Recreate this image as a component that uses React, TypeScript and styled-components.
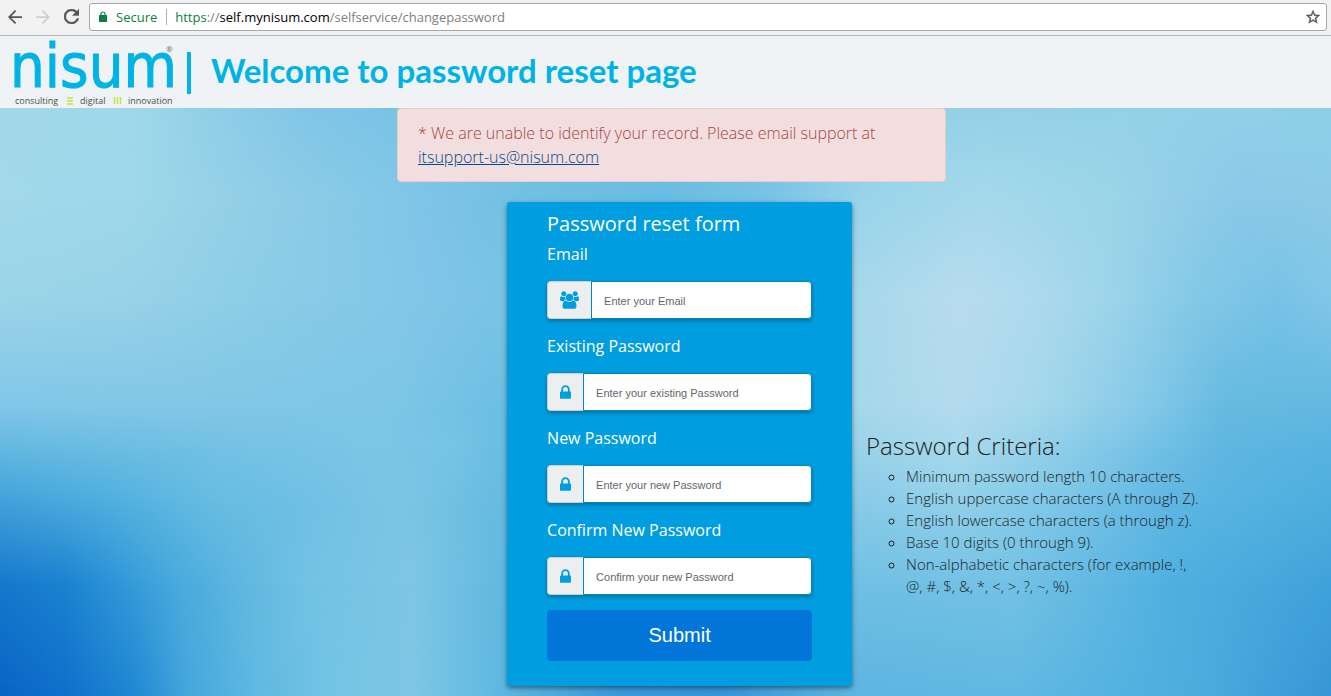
import React from "react";
import styled, { createGlobalStyle } from "styled-components";

const GlobalStyle = createGlobalStyle`
  *, *::before, *::after { box-sizing: border-box; }
  body { margin: 0; font-family: "Open Sans", "Noto Sans", sans-serif; font-size: 16px; }
  h1, h2, ul, p { margin: 0; }
`;

const Page = styled.div`
  display: flex;
  flex-direction: column;
  min-height: 100vh;
`;

/* Browser toolbar */
const Toolbar = styled.div`
  display: flex;
  align-items: center;
  height: 36px;
  padding: 0 4px 2px 8px;
  background: #f2f2f2;
  border-bottom: 1px solid #b4b4b4;
`;

const NavButton = styled.button<{ $muted?: boolean }>`
  display: flex;
  width: 28px;
  padding: 0;
  border: 0;
  background: none;
  color: ${(p) => (p.$muted ? "#cfcfcf" : "#555")};
`;

const AddressBar = styled.div`
  display: flex;
  flex: 1;
  align-items: center;
  height: 28px;
  margin-left: -3px;
  padding: 0 6px 0 9px;
  background: #fff;
  border: 1px solid #a8a8a8;
  border-radius: 3px;
  font-family: "Open Sans", sans-serif;
  font-size: 13px;
  color: #808080;
`;

const Secure = styled.span`
  margin-left: 9px;
  padding-right: 9px;
  border-right: 1px solid #b0b0b0;
  margin-right: 8px;
  line-height: 16px;
  color: #0b8043;
`;

const Url = styled.span`
  flex: 1;
  em { font-style: normal; color: #0b8043; }
  strong { font-weight: 400; color: #000; }
`;

const StarButton = styled(NavButton)`
  width: 14px;
`;

/* Site header */
const Header = styled.header`
  display: flex;
  align-items: center;
  height: 72px;
  padding: 2px 0 0 14px;
  background: #eff3f5;
`;

const Divider = styled.span`
  width: 4px;
  height: 42px;
  margin: 0 20px 0 12px;
  background: #00b3e6;
`;

const Welcome = styled.h1`
  padding-bottom: 6px;
  font-family: Lato, "Open Sans", sans-serif;
  font-size: 33px;
  font-weight: 700;
  line-height: 40px;
  color: #00b3e6;
`;

/* Page body */
const Main = styled.main`
  position: relative;
  isolation: isolate;
  flex: 1;
  padding-bottom: 10px;
  background: #7cc4e4;
`;

const BackdropSvg = styled.svg`
  position: absolute;
  inset: 0;
  z-index: -1;
  width: 100%;
  height: 100%;
`;

const AlertRow = styled.div`
  display: grid;
  grid-template-columns: 33fr minmax(0, 549px) 32fr;
`;

const Alert = styled.p`
  grid-column: 2;
  padding: 12px 20px;
  border: 1px solid #ebcccc;
  border-radius: 4px;
  background: #f2dede;
  line-height: 24px;
  font-weight: 300;
  color: #a94442;
  a { color: #014c8c; }
`;

const Columns = styled.div`
  display: grid;
  grid-template-columns: 18fr 345px 17fr;
  margin-top: 20px;
`;

const Form = styled.form`
  grid-column: 2;
  padding: 8px 40px 25px;
  border-radius: 3px;
  background: #009ee0;
  box-shadow: 0 2px 5px rgba(0, 0, 0, 0.45);
  color: #fff;
`;

const FormTitle = styled.h2`
  margin-bottom: 4px;
  font-size: 20px;
  font-weight: 400;
  line-height: 28px;
`;

const Field = styled.div`
  display: flex;
  flex-direction: column;
  gap: 15px;
  margin-bottom: 15px;
`;

const Label = styled.label`
  line-height: 24px;
`;

const InputGroup = styled.div`
  display: flex;
  height: 38px;
  border-radius: 4px;
  box-shadow: 0 2px 4px rgba(0, 0, 0, 0.3);
`;

const Addon = styled.span`
  display: flex;
  align-items: center;
  padding: 0 12px;
  border: 1px solid #ccc;
  border-right: 0;
  border-radius: 4px 0 0 4px;
  background: #eceeef;
  color: #009ee0;
`;

const TextInput = styled.input`
  flex: 1;
  min-width: 0;
  padding: 2px 12px 0;
  border: 1px solid #0085bd;
  border-radius: 0 4px 4px 0;
  background: #fff;
  font-family: "Liberation Sans", Arial, sans-serif;
  font-size: 11px;
  color: #333;
  &::placeholder { color: #5f666d; opacity: 1; }
`;

const Submit = styled.button`
  width: 100%;
  height: 51px;
  border: 0;
  border-radius: 4px;
  background: #0275d8;
  font-family: "Liberation Sans", Arial, sans-serif;
  font-size: 20px;
  color: #fff;
`;

const Criteria = styled.section`
  max-width: 350px;
  padding: 228px 0 0 14px;
  color: #1c1e1f;
`;

const CriteriaTitle = styled.h2`
  margin-bottom: 3px;
  font-size: 24px;
  font-weight: 300;
  line-height: 32px;
`;

const CriteriaList = styled.ul`
  padding-left: 40px;
  list-style: circle;
  font-size: 15px;
  font-weight: 300;
  line-height: 22px;
`;

/* Bands of colour across the backdrop: each fades into the next one down.
   Positions are percentages of the width (stops) and of the height (y). */
const bands: { y: number; stops: [number, string][] }[] = [
  { y: 0, stops: [[0, "#a2d8ea"], [10, "#a0d8ea"], [15, "#92d1e8"], [23, "#82c5e7"], [30, "#78c4e6"], [48, "#72c2e4"], [70, "#94d0e8"], [84, "#94d2e8"], [100, "#8ed0e8"]] },
  { y: 16, stops: [[0, "#a2d8ea"], [10, "#9ed7ea"], [20, "#90cee6"], [30, "#82c6e8"], [40, "#70bfe3"], [50, "#68bbe1"], [58, "#78c2e6"], [65, "#9ad4ea"], [74, "#a6d9eb"], [84, "#9ad4e8"], [93, "#8ac8e8"], [100, "#8ccae6"]] },
  { y: 33, stops: [[0, "#9ad4e8"], [9, "#98d2e8"], [18, "#8ccee6"], [30, "#84c6e8"], [38, "#78c4e6"], [50, "#6cbee4"], [64, "#a6d8ea"], [72, "#b8dcee"], [77, "#b0daee"], [83, "#9ed5ea"], [90, "#82c8e6"], [96, "#76c2e6"], [100, "#80c6e8"]] },
  { y: 51, stops: [[0, "#80c6e8"], [15, "#82c6e6"], [30, "#7cc6e6"], [38, "#6cbee2"], [50, "#60b8e0"], [64, "#a4d8e8"], [72, "#b4daee"], [78, "#a4d8ea"], [86, "#84c8e8"], [92, "#66bae0"], [100, "#62b8e0"]] },
  { y: 58, stops: [[0, "#62b8e0"], [8, "#6abce2"], [18, "#74c2e4"], [28, "#7cc6e6"], [34, "#76c4e4"], [38, "#6abce2"], [50, "#60b8e0"], [64, "#98d2e8"], [72, "#a6d9ec"], [78, "#94d0ea"], [86, "#76c2e6"], [92, "#5eb6e0"], [100, "#58b2e0"]] },
  { y: 67, stops: [[0, "#42a0da"], [8, "#4eaede"], [16, "#66bce2"], [24, "#72c0e4"], [30, "#7cc6e4"], [38, "#66bae0"], [50, "#50b0e0"], [64, "#88cae8"], [72, "#92d0ea"], [80, "#7cc6e8"], [88, "#5eb6e2"], [100, "#4eaede"]] },
  { y: 81, stops: [[0, "#1678cc"], [5, "#1c82d0"], [9, "#3096d8"], [13, "#46a8dc"], [18, "#5eb6e0"], [23, "#72c2e4"], [31, "#7ec6e4"], [38, "#60b8e0"], [50, "#40a0dc"], [64, "#70c0e4"], [76, "#74c2e4"], [88, "#50b0e0"], [100, "#40a2da"]] },
  { y: 100, stops: [[0, "#0864c4"], [5, "#1070cc"], [10, "#2086d2"], [14, "#44a6dc"], [19, "#5eb8e0"], [25, "#74c4e4"], [31, "#7ec6e4"], [38, "#5cb6e0"], [46, "#3a9adc"], [54, "#3494da"], [64, "#5cb4e0"], [76, "#60b8e2"], [90, "#4cacde"], [100, "#3696d6"]] },
];

const Backdrop = () => (
  <BackdropSvg viewBox="0 0 100 100" preserveAspectRatio="none" aria-hidden="true">
    <defs>
      {bands.map((band, i) => (
        <React.Fragment key={band.y}>
          <linearGradient id={`band${i}`}>
            {band.stops.map(([at, color]) => (
              <stop key={at} offset={`${at}%`} stopColor={color} />
            ))}
          </linearGradient>
          {i > 0 && (
            <>
              <linearGradient id={`fade${i}`} gradientUnits="userSpaceOnUse" x1="0" x2="0" y1={bands[i - 1].y} y2={band.y}>
                <stop offset="0" stopColor="#fff" stopOpacity="0" />
                <stop offset="1" stopColor="#fff" />
              </linearGradient>
              <mask id={`mask${i}`} maskUnits="userSpaceOnUse" x="0" y="0" width="100" height="100">
                <rect width="100" height="100" fill={`url(#fade${i})`} />
              </mask>
            </>
          )}
        </React.Fragment>
      ))}
    </defs>
    {bands.map((band, i) => (
      <rect key={band.y} width="100" height="100" fill={`url(#band${i})`} mask={i > 0 ? `url(#mask${i})` : undefined} />
    ))}
  </BackdropSvg>
);

const Logo = () => (
  <svg width="161" height="70" viewBox="0 0 161 70" role="img" aria-label="nisum consulting digital innovation">
    <text x="-4" y="49" fontFamily='"DejaVu Sans Condensed", "DejaVu Sans", sans-serif' fontSize="61" fill="#00b3e6" stroke="#00b3e6">nisum</text>
    <text x="152" y="14" fontFamily='"Open Sans", sans-serif' fontSize="8" fill="#666">®</text>
    <g fontFamily='"Open Sans", sans-serif' fontSize="9" fill="#4c4c4c">
      <text x="1" y="66">consulting</text>
      <text x="66" y="66">digital</text>
      <text x="114" y="66">innovation</text>
    </g>
    <path d="M53 60h6M53 63h6M53 66h6M100.500 59v7M103.500 59v7M106.500 59v7" stroke="#cfdf3a" strokeWidth="1.500" />
  </svg>
);

const BackIcon = () => (
  <svg width="14" height="14" viewBox="4 4 16 16" fill="currentColor" aria-hidden="true">
    <path d="M20 11H7.83l5.59-5.59L12 4l-8 8 8 8 1.410-1.410L7.830 13H20z" />
  </svg>
);

const ForwardIcon = () => (
  <svg width="14" height="14" viewBox="4 4 16 16" fill="currentColor" aria-hidden="true">
    <path d="M12 4l-1.410 1.410L16.170 11H4v2h12.170l-5.580 5.590L12 20l8-8z" />
  </svg>
);

const ReloadIcon = () => (
  <svg width="15" height="15" viewBox="4 4 16 16" fill="currentColor" stroke="currentColor" strokeWidth="0.4" aria-hidden="true">
    <path d="M17.65 6.35C16.2 4.9 14.21 4 12 4c-4.42 0-7.99 3.58-7.99 8s3.57 8 7.99 8c3.73 0 6.84-2.55 7.73-6h-2.08c-.82 2.33-3.04 4-5.65 4-3.31 0-6-2.69-6-6s2.69-6 6-6c1.66 0 3.14.69 4.22 1.780L13 11h7V4l-2.350 2.350z" />
  </svg>
);

const StarIcon = () => (
  <svg width="14" height="14" viewBox="2 2 20 20" fill="currentColor" stroke="currentColor" strokeWidth="0.5" aria-hidden="true">
    <path d="M22 9.24l-7.19-.62L12 2 9.19 8.63 2 9.24l5.46 4.73L5.82 21 12 17.27 18.18 21l-1.63-7.03L22 9.24zM12 15.4l-3.76 2.27 1-4.28-3.32-2.88 4.38-.38L12 6.1l1.71 4.04 4.38.38-3.32 2.88 1 4.28L12 15.4z" />
  </svg>
);

const SecureIcon = () => (
  <svg width="8" height="11" viewBox="0 0 8 11" aria-hidden="true">
    <rect y="4" width="8" height="7" rx="0.5" fill="#0b8043" />
    <path d="M2 4.500V3a2 2 0 0 1 4 0v1.500" fill="none" stroke="#0b8043" strokeWidth="1.200" />
  </svg>
);

const UsersIcon = () => (
  <svg width="19" height="18" viewBox="0 0 1920 1792" fill="currentColor" aria-hidden="true">
    <path d="M593 896q-162 5-265 128H194q-82 0-138-40.5T0 865q0-353 124-353 6 0 43.5 21t97.5 42.5T384 597q67 0 133-23-5 37-5 66 0 139 81 256zm1071 637q0 120-73 189.5t-194 69.5H523q-121 0-194-69.5T256 1533q0-53 3.5-103.5t14-109T300 1212t43-97.5 62-81 85.5-53.5T602 960q10 0 43 21.5t73 48 107 48 135 21.5 135-21.5 107-48 73-48 43-21.5q61 0 111.5 20t85.5 53.5 62 81 43 97.5 26.5 108.5 14 109 3.5 103.5zM640 256q0 106-75 181t-181 75-181-75-75-181 75-181T384 0t181 75 75 181zm704 384q0 159-112.5 271.5T960 1024 688.5 911.5 576 640t112.5-271.5T960 256t271.5 112.5T1344 640zm576 225q0 78-56 118.500t-138 40.500h-134q-103-123-265-128 81-117 81-256 0-29-5-66 66 23 133 23 59 0 119-21.500t97.500-42.500 43.500-21q124 0 124 353zm-128-609q0 106-75 181t-181 75-181-75-75-181 75-181 181-75 181 75 75 181z" />
  </svg>
);

const LockIcon = () => (
  <svg width="11" height="14" viewBox="320 128 1152 1408" fill="currentColor" aria-hidden="true">
    <path d="M640 768h512V576q0-106-75-181t-181-75-181 75-75 181v192zm832 96v576q0 40-28 68t-68 28H416q-40 0-68-28t-28-68V864q0-40 28-68t68-28h32V576q0-184 132-316t316-132 316 132 132 316v192h32q40 0 68 28t28 68z" />
  </svg>
);

const fields = [
  { id: "email", label: "Email", type: "email", placeholder: "Enter your Email", Icon: UsersIcon },
  { id: "existing", label: "Existing Password", type: "password", placeholder: "Enter your existing Password", Icon: LockIcon },
  { id: "new", label: "New Password", type: "password", placeholder: "Enter your new Password", Icon: LockIcon },
  { id: "confirm", label: "Confirm New Password", type: "password", placeholder: "Confirm your new Password", Icon: LockIcon },
];

const criteria = [
  "Minimum password length 10 characters.",
  "English uppercase characters (A through Z).",
  "English lowercase characters (a through z).",
  "Base 10 digits (0 through 9).",
  "Non-alphabetic characters (for example, !, @, #, $, &, *, <, >, ?, ~, %).",
];

export default function App() {
  return (
    <>
      <GlobalStyle />
      <Page>
        <Toolbar>
          <NavButton aria-label="Back"><BackIcon /></NavButton>
          <NavButton aria-label="Forward" $muted><ForwardIcon /></NavButton>
          <NavButton aria-label="Reload"><ReloadIcon /></NavButton>
          <AddressBar>
            <SecureIcon />
            <Secure>Secure</Secure>
            <Url><em>https</em>://<strong>self.mynisum.com</strong>/selfservice/changepassword</Url>
            <StarButton aria-label="Bookmark this page"><StarIcon /></StarButton>
          </AddressBar>
        </Toolbar>
        <Header>
          <Logo />
          <Divider />
          <Welcome>Welcome to password reset page</Welcome>
        </Header>
        <Main>
          <Backdrop />
          <AlertRow>
            <Alert role="alert">
              * We are unable to identify your record. Please email support at{" "}
              <a href="mailto:itsupport-us@nisum.com">itsupport-us@nisum.com</a>
            </Alert>
          </AlertRow>
          <Columns>
            <Form onSubmit={(e) => e.preventDefault()}>
              <FormTitle>Password reset form</FormTitle>
              {fields.map(({ id, label, type, placeholder, Icon }) => (
                <Field key={id}>
                  <Label htmlFor={id}>{label}</Label>
                  <InputGroup>
                    <Addon><Icon /></Addon>
                    <TextInput id={id} type={type} placeholder={placeholder} />
                  </InputGroup>
                </Field>
              ))}
              <Submit type="submit">Submit</Submit>
            </Form>
            <Criteria>
              <CriteriaTitle>Password Criteria:</CriteriaTitle>
              <CriteriaList>
                {criteria.map((text) => <li key={text}>{text}</li>)}
              </CriteriaList>
            </Criteria>
          </Columns>
        </Main>
      </Page>
    </>
  );
}
